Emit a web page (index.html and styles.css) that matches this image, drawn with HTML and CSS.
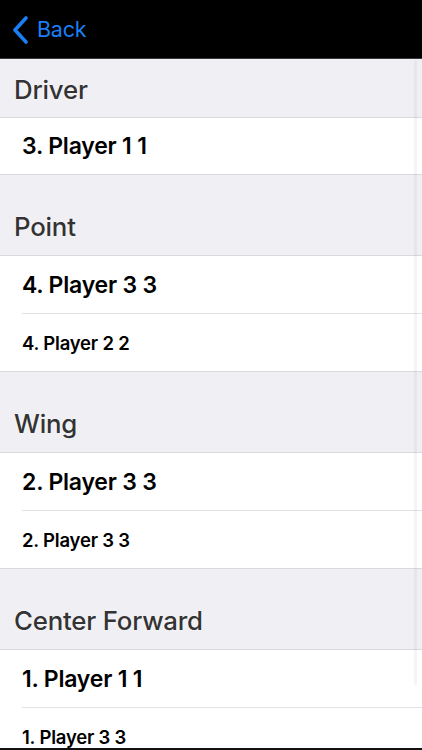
FILE: index.html
```html
<!DOCTYPE html>
<html>
<head>
<meta charset="utf-8">
<link rel="stylesheet" href="styles.css">
</head>
<body>
<div class="screen">
  <div class="nav">
    <svg class="chev" width="18" height="28" viewBox="0 0 18 28"><path d="M15 2 L4 14 L15 26" fill="none" stroke="#1a7ef5" stroke-width="3.6" stroke-linecap="round" stroke-linejoin="round"/></svg>
    <span class="back">Back</span>
  </div>
  <div class="list">
    <div class="header first">Driver</div>
    <div class="group">
      <div class="row big">3. Player 1 1</div>
    </div>
    <div class="header">Point</div>
    <div class="group">
      <div class="row big">4. Player 3 3</div>
      <div class="row small">4. Player 2 2</div>
    </div>
    <div class="header">Wing</div>
    <div class="group">
      <div class="row big">2. Player 3 3</div>
      <div class="row small">2. Player 3 3</div>
    </div>
    <div class="header">Center Forward</div>
    <div class="group">
      <div class="row big">1. Player 1 1</div>
      <div class="row small">1. Player 3 3</div>
    </div>
  </div>
  <div class="scrollbar"></div>
  <div class="bottomline"></div>
</div>
</body>
</html>
```
FILE: styles.css
```css
html, body {
  margin: 0;
  padding: 0;
}
body {
  font-family: Inter, "Noto Sans", sans-serif;
  background: #ffffff;
}
.screen {
  position: relative;
  width: 422px;
  height: 750px;
  overflow: hidden;
  background: #efeff4;
}
.nav {
  height: 59px;
  background: #000;
  display: flex;
  align-items: center;
  padding-left: 11px;
  box-sizing: border-box;
  border-bottom: 1px solid #3a3a3c;
}
.chev {
  display: block;
  margin-top: 1px;
}
.back {
  color: #1a7ef5;
  font-size: 21.5px;
  margin-left: 8px;
  letter-spacing: -0.2px;
}
.list {
  display: flex;
  flex-direction: column;
}
.header {
  height: 80px;
  box-sizing: border-box;
  display: flex;
  align-items: flex-end;
  padding: 0 0 13px 14px;
  font-size: 25.8px;
  font-weight: 500;
  color: #333333;
  text-shadow: 0 0 2px #fff;
  letter-spacing: -0.2px;
}
.header.first {
  height: 58px;
  padding-bottom: 12px;
}
.group {
  background: #fff;
  border-top: 1px solid #d9d9de;
  border-bottom: 1px solid #d9d9de;
}
.row {
  height: 57px;
  display: flex;
  align-items: center;
  margin-left: 22px;
  color: #000;
  font-weight: 600;
  letter-spacing: -0.2px;
}
.row + .row {
  border-top: 1px solid #e2e2e6;
}
.header.first + .group .row {
  height: 56px;
}
.row.big {
  font-size: 23px;
}
.row.small {
  font-size: 18.5px;
}
.scrollbar {
  position: absolute;
  right: 5px;
  top: 60px;
  width: 3px;
  height: 625px;
  border-radius: 2px;
  background: rgba(0, 0, 0, 0.04);
}
.bottomline {
  position: absolute;
  left: 0;
  right: 0;
  bottom: 0;
  height: 2px;
  background: #111;
}
```
